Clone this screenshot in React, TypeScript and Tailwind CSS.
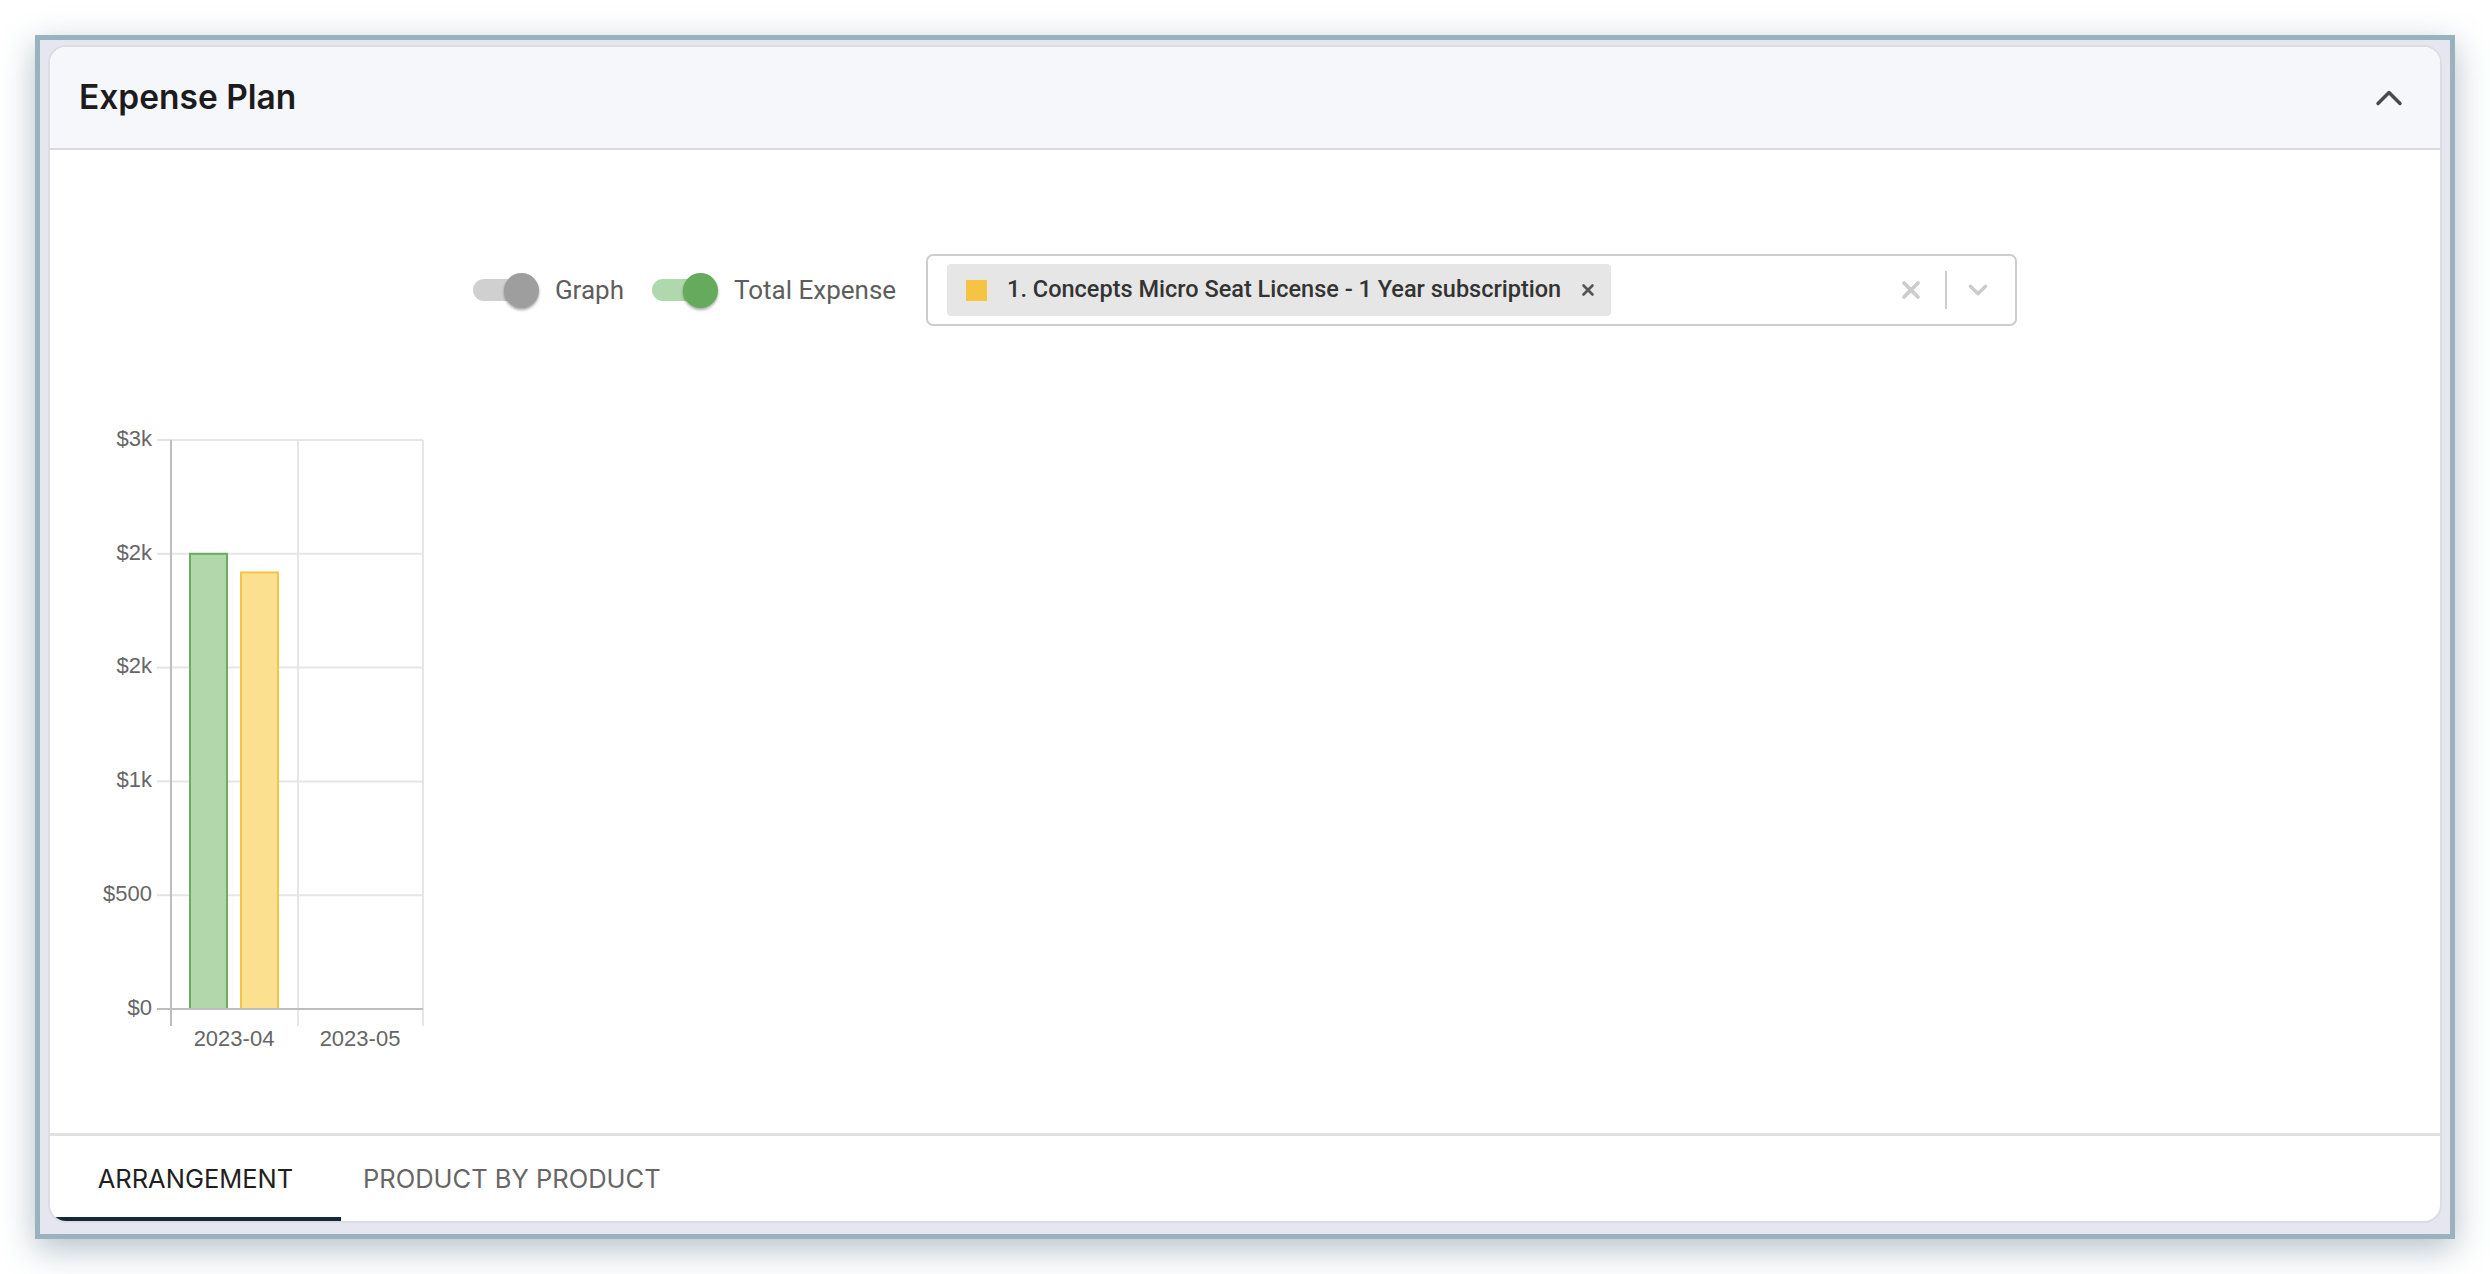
import React from 'react';
import { ChevronUp, ChevronDown, X } from 'lucide-react';

/* ------------------------------------------------------------------ */
/*  Data                                                              */
/* ------------------------------------------------------------------ */
const yTicks = [
  { v: 2500, label: '$3k' },
  { v: 2000, label: '$2k' },
  { v: 1500, label: '$2k' },
  { v: 1000, label: '$1k' },
  { v: 500,  label: '$500' },
  { v: 0,    label: '$0' },
];

const months = ['2023-04', '2023-05'];

const bars = [
  { x: 99,  v: 2000, fill: '#b1d7ab', stroke: '#6aac62' },
  { x: 150, v: 1918, fill: '#fae08f', stroke: '#f6c445' },
];

/* ------------------------------------------------------------------ */
/*  Chart                                                             */
/* ------------------------------------------------------------------ */
const ExpenseChart: React.FC = () => {
  const top = 18, base = 587, left = 80, right = 332, mid = 207;
  const y = (v: number) => base - (v / 2500) * (base - top);

  return (
    <svg width={360} height={640} className="block" style={{ fontFamily: '"Liberation Sans", Arial, sans-serif' }}>
      {/* grid */}
      {yTicks.map(t => (
        <g key={t.v}>
          <line x1={66} x2={left} y1={y(t.v)} y2={y(t.v)} stroke="#e2e2e2" strokeWidth={2} />
          {t.v > 0 && <line x1={left} x2={right} y1={y(t.v)} y2={y(t.v)} stroke="#e6e6e6" strokeWidth={2} />}
          <text x={61} y={y(t.v)} textAnchor="end" dominantBaseline="middle" fontSize={22} fill="#666">{t.label}</text>
        </g>
      ))}
      <line x1={mid} x2={mid} y1={top} y2={604} stroke="#e6e6e6" strokeWidth={2} />
      <line x1={right} x2={right} y1={top} y2={604} stroke="#e6e6e6" strokeWidth={2} />

      {/* bars */}
      {bars.map(b => (
        <rect key={b.x} x={b.x} y={y(b.v)} width={37} height={base - y(b.v)} fill={b.fill} stroke={b.stroke} strokeWidth={2} />
      ))}

      {/* axes */}
      <line x1={left} x2={left} y1={top} y2={604} stroke="#bdbdbd" strokeWidth={2} />
      <line x1={66} x2={right} y1={base} y2={base} stroke="#bdbdbd" strokeWidth={2} />

      {months.map((m, i) => (
        <text key={m} x={143 + i * 126} y={618} textAnchor="middle" dominantBaseline="middle" fontSize={22} fill="#666">{m}</text>
      ))}
    </svg>
  );
};

/* ------------------------------------------------------------------ */
/*  Toggle                                                            */
/* ------------------------------------------------------------------ */
const Toggle: React.FC<{ on?: boolean; label: string }> = ({ on, label }) => (
  <div className="flex items-center gap-[16px]">
    <div className="relative w-[66px] h-[36px] flex items-center">
      <div className={`w-[62px] h-[22px] rounded-full ${on ? 'bg-[#afd8ac]' : 'bg-[#d0d0d0]'}`} />
      <div className={`absolute right-0 w-[35px] h-[35px] rounded-full shadow-[0_2px_3px_rgba(0,0,0,0.35)] ${on ? 'bg-[#66ab5d]' : 'bg-[#9e9e9e]'}`} />
    </div>
    <span className="text-[26px] text-[#5e5e5e] font-['Roboto',sans-serif]">{label}</span>
  </div>
);

/* ------------------------------------------------------------------ */
/*  App                                                               */
/* ------------------------------------------------------------------ */
export default function App() {
  return (
    <div className="h-screen bg-white p-[35px] font-['Inter',sans-serif]">
      <div className="h-full flex flex-col border-[5px] border-[#9ab2bd] bg-[#e6e6f0] pt-[5px] px-[8px] pb-[11px] shadow-[0_10px_32px_rgba(70,100,120,0.4)]">
        <div className="flex-1 flex flex-col bg-white rounded-[18px] border-2 border-[#dcdce3] overflow-hidden">

          {/* ---------------- Header ---------------- */}
          <header className="h-[103px] shrink-0 flex items-center justify-between bg-[#f6f7fb] border-b-2 border-[#dadbe0] pl-[29px] pr-[29px]">
            <h1 className="text-[33.5px] font-semibold text-[#1c1c1e]">Expense Plan</h1>
            <ChevronUp size={44} strokeWidth={1.9} className="text-[#4a4a4a]" />
          </header>

          {/* ---------------- Body ---------------- */}
          <div className="flex-1 flex flex-col">
            <div className="flex items-center justify-center pt-[104px]">
              <Toggle label="Graph" />
              <div className="w-[28px]" />
              <Toggle on label="Total Expense" />
              <div className="w-[30px]" />

              {/* select */}
              <div className="w-[1091px] h-[72px] flex items-center border-2 border-[#cdcdcd] rounded-[7px] pl-[19px] pr-[22px]">
                <div className="h-[52px] flex items-center bg-[#e6e6e6] rounded-[4px] pl-[19px] pr-[14px] gap-[20px]">
                  <span className="w-[21px] h-[21px] bg-[#f6c342]" />
                  <span className="text-[23.5px] font-medium text-[#333] font-['Roboto',sans-serif]">1. Concepts Micro Seat License - 1 Year subscription</span>
                  <X size={18} strokeWidth={3.5} className="text-[#555] ml-[-2px]" />
                </div>
                <div className="flex-1" />
                <X size={28} strokeWidth={3.2} className="text-[#cccccc]" />
                <div className="w-[2px] h-[38px] bg-[#cccccc] ml-[20px] mr-[16px]" />
                <ChevronDown size={30} strokeWidth={2.8} className="text-[#cccccc]" />
              </div>
            </div>

            <div className="pl-[41px] mt-[96px]">
              <ExpenseChart />
            </div>
          </div>

          {/* ---------------- Tabs ---------------- */}
          <div className="h-[88px] shrink-0 flex border-t-[3px] border-[#e0e0e0]">
            <div className="w-[291px] flex flex-col">
              <div className="flex-1 flex items-center justify-center pt-[5px] text-[25.5px] text-[#1f1f1f]">ARRANGEMENT</div>
              <div className="h-[4px] bg-[#15283a]" />
            </div>
            <div className="flex items-center pl-[22px] pt-[1px] text-[25.5px] text-[#666]">PRODUCT BY PRODUCT</div>
          </div>
        </div>
      </div>
    </div>
  );
}
